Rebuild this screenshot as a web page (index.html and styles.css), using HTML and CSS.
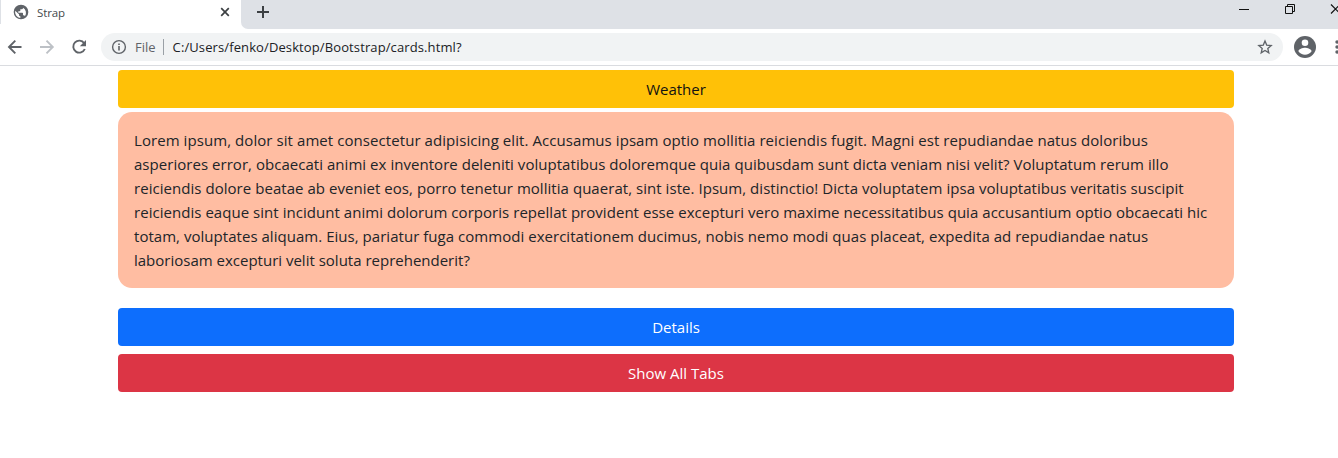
FILE: index.html
```html
<!DOCTYPE html>
<html lang="en">
<head>
<meta charset="utf-8">
<title>Strap</title>
<link rel="stylesheet" href="styles.css">
</head>
<body>
<header class="browser">
  <div class="tabstrip">
    <div class="tab">
      <svg class="globe" width="16" height="16" viewBox="0 0 24 24"><path fill="#5f6368" d="M12 1a11 11 0 1 0 0 22 11 11 0 0 0 0-22zm-1 19.900A9 9 0 0 1 3.300 10L9 15.500v1a2 2 0 0 0 2 2zm6.900-2.500A2 2 0 0 0 16 17h-1v-3a1 1 0 0 0-1-1H8v-2h2a1 1 0 0 0 1-1V8h2a2 2 0 0 0 2-2v-.4a9 9 0 0 1 2.900 12.800z"/></svg>
      <span class="tab-title">Strap</span>
      <svg class="close" width="10" height="10" viewBox="0 0 10 10"><path d="M1.200 1.200l7.600 7.600M8.800 1.200L1.200 8.800" stroke="#3c4043" stroke-width="1.700"/></svg>
    </div>
    <div class="strip-rest">
      <svg class="plus" width="14" height="14" viewBox="0 0 14 14"><path d="M7 1v12M1 7h12" stroke="#3c4043" stroke-width="2"/></svg>
      <svg class="controls" width="100" height="28" viewBox="0 0 100 28" fill="none" stroke="#111" stroke-width="1"><path d="M1 9.500h10M47.500 6.500h7v7h-7zM49.500 6.500v-2h7v7h-2"/><path d="M93 4.500l9 9M93 13.500l9-9" stroke-width="1.200"/></svg>
    </div>
  </div>
  <div class="toolbar">
    <svg class="nav" width="96" height="36" viewBox="0 0 96 36" fill="none" stroke-width="1.900"><path d="M21.500 18H9.500M15.300 11.700L9 18l6.300 6.300" stroke="#5f6368"/><path d="M40 18h12M46.500 11.700L52.800 18l-6.300 6.300" stroke="#bdc1c6"/><path d="M84.200 14.200A6 6 0 1 0 84.800 20" stroke="#5f6368"/><path d="M86 11v6.200h-6.200z" fill="#5f6368"/></svg>
    <div class="omnibox">
      <svg class="info" width="16" height="16" viewBox="0 0 16 16"><circle cx="8" cy="8" r="6.400" fill="none" stroke="#5f6368" stroke-width="1.400"/><path d="M8 7v4.500M8 4.400v1.600" stroke="#5f6368" stroke-width="1.600"/></svg>
      <span class="scheme">File</span>
      <span class="divider"></span>
      <span class="url">C:/Users/fenko/Desktop/Bootstrap/cards.html?</span>
      <svg class="star" width="16" height="16" viewBox="0 0 16 16"><path d="M8 2l1.700 4.100 4.500.4-3.400 2.900 1 4.400L8 11.500l-3.800 2.300 1-4.400-3.400-2.900 4.500-.4z" fill="none" stroke="#5f6368" stroke-width="1.300"/></svg>
    </div>
    <svg class="profile" width="22" height="22" viewBox="0 0 22 22"><circle cx="11" cy="11" r="11" fill="#5f6368"/><circle cx="11" cy="6.700" r="3.300" fill="#fff"/><path d="M4.400 15.300c0-2.300 4.400-3.500 6.600-3.500s6.600 1.200 6.600 3.500a8 8 0 0 1-13.200 0z" fill="#fff"/></svg>
    <svg class="menu" width="4" height="16" viewBox="0 0 4 16" fill="#5f6368"><circle cx="2" cy="3" r="1.700"/><circle cx="2" cy="8" r="1.700"/><circle cx="2" cy="13" r="1.700"/></svg>
  </div>
</header>
<main class="container">
  <button class="btn btn-warning">Weather</button>
  <div class="card">
    <span class="line l1">Lorem ipsum, dolor sit amet consectetur adipisicing elit. Accusamus ipsam optio mollitia reiciendis fugit. Magni est repudiandae natus doloribus</span>
    <span class="line l2">asperiores error, obcaecati animi ex inventore deleniti voluptatibus doloremque quia quibusdam sunt dicta veniam nisi velit? Voluptatum rerum illo</span>
    <span class="line l3">reiciendis dolore beatae ab eveniet eos, porro tenetur mollitia quaerat, sint iste. Ipsum, distinctio! Dicta voluptatem ipsa voluptatibus veritatis suscipit</span>
    <span class="line l4">reiciendis eaque sint incidunt animi dolorum corporis repellat provident esse excepturi vero maxime necessitatibus quia accusantium optio obcaecati hic</span>
    <span class="line l5">totam, voluptates aliquam. Eius, pariatur fuga commodi exercitationem ducimus, nobis nemo modi quas placeat, expedita ad repudiandae natus</span>
    <span class="line l6">laboriosam excepturi velit soluta reprehenderit?</span>
  </div>
  <button class="btn btn-primary">Details</button>
  <button class="btn btn-danger">Show All Tabs</button>
</main>
</body>
</html>
```
FILE: styles.css
```css
* { box-sizing: border-box; }
body {
  margin: 0;
  height: 458px;
  overflow: hidden;
  background: #fff;
  color: #212529;
  font-family: "Open Sans", "Noto Sans", sans-serif;
}
svg { display: block; flex: none; }
.browser { height: 66px; border-bottom: 1px solid #dadce0; }
.tabstrip { display: flex; height: 29px; background: #fff; }
.tab {
  display: flex;
  align-items: center;
  width: 241px;
  height: 24px;
  padding: 0 11px 0 12px;
  border-left: 1px solid #dee1e6;
}
.strip-rest {
  display: flex;
  flex: 1;
  background: #dee1e6;
  border-bottom-left-radius: 7px;
}
.tab-title { margin-left: 8px; font-size: 11.500px; letter-spacing: -0.1px; color: #45494d; }
.close { margin-left: auto; }
.plus { margin: 5px 0 0 15px; }
.controls { margin-left: auto; }
.toolbar { display: flex; align-items: center; height: 36px; }
.nav { margin-right: 5px; }
.omnibox {
  display: flex;
  flex: none;
  align-items: center;
  width: 1182px;
  height: 28px;
  padding: 0 10px;
  border-radius: 14px;
  background: #f1f3f4;
  font-size: 13px;
  white-space: nowrap;
}
.scheme { margin-left: 8px; color: #5f6368; }
.divider { width: 1px; height: 16px; margin: 0 9px 0 7px; background: #9aa0a6; }
.url { color: #202124; letter-spacing: 0.11px; }
.star { margin-left: auto; }
.profile { margin-left: 11px; }
.menu { margin-left: 19px; }
.container { display: flex; flex-direction: column; width: 1116px; margin: 4px 0 0 118px; }
.btn {
  height: 38px;
  padding: 0;
  border: 0;
  border-radius: 4px;
  font: 15px/38px "Open Sans", "Noto Sans", sans-serif;
}
.btn-warning { background: #ffc107; color: #111; }
.btn-primary { background: #0d6efd; color: #fff; }
.btn-danger { margin-top: 8px; background: #dc3545; color: #fff; }
.card {
  height: 176px;
  margin: 4px 0 20px;
  padding: 16px;
  border-radius: 14px;
  background: #ffbda2;
  font-size: 15px;
  line-height: 24px;
}
.line { display: block; white-space: nowrap; }
.l1 { letter-spacing: 0.07px; }
.l2 { letter-spacing: 0.038px; }
.l3 { letter-spacing: 0.044px; }
.l4 { letter-spacing: 0.04px; }
.l5 { letter-spacing: 0.034px; }
```
